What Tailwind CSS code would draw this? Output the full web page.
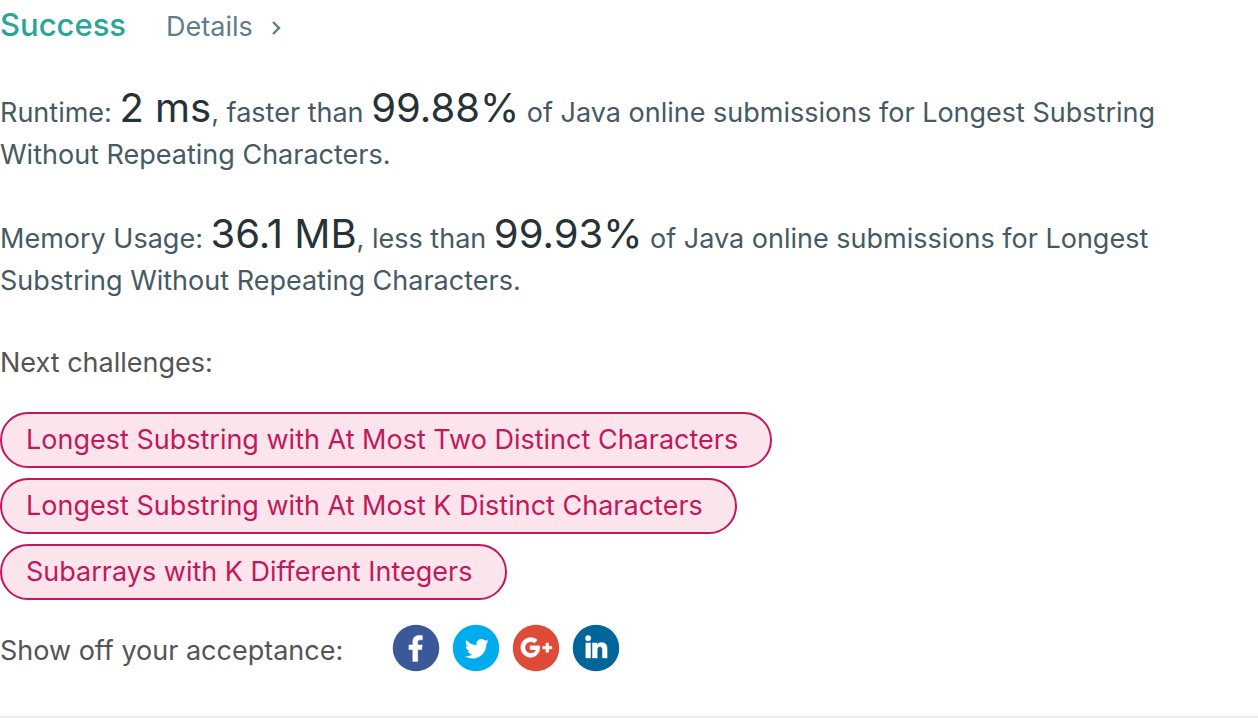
<!DOCTYPE html>
<html lang="en">
<head>
<meta charset="utf-8">
<meta name="viewport" content="width=device-width, initial-scale=1">
<title>Submission result</title>
<script src="https://cdn.jsdelivr.net/npm/@tailwindcss/browser@4"></script>
</head>
<body class="bg-white font-['Inter',sans-serif] text-[27px] leading-[42px] text-[#455a64]">
<main class="border-b-2 border-[#eeeeee] pt-1 pb-11">
  <header class="flex items-baseline gap-10">
    <h1 class="text-[31px] font-medium text-[#26a69a]">Success</h1>
    <a href="#" class="flex items-center gap-4 text-[#607d8b]">Details
      <svg class="mt-0.5 h-4 w-4" viewBox="0 0 16 16" fill="none" stroke="currentColor" stroke-width="2.4" aria-hidden="true"><path d="M4 2l6 6-6 6"/></svg>
    </a>
  </header>
  <section class="mt-11 flex flex-col gap-[42px]">
    <p>Runtime: <span class="text-[40px] leading-[30px] text-[#263238]">2 ms</span>, faster than <span class="text-[40px] leading-[30px] text-[#263238]">99.88%</span> of Java online submissions for Longest Substring Without Repeating Characters.</p>
    <p>Memory Usage: <span class="text-[40px] leading-[30px] text-[#263238]">36.1 MB</span>, less than <span class="text-[40px] leading-[30px] text-[#263238]">99.93%</span> of Java online submissions for Longest Substring Without Repeating Characters.</p>
  </section>
  <section class="mt-10 text-[#545454]">
    <h2>Next challenges:</h2>
    <ul class="mt-7 flex flex-col items-start gap-[10px] text-[#c2185b]">
      <li><a href="#" class="flex h-14 items-center rounded-full border-2 border-[#c2185b] bg-[#fce4ec] pr-8 pl-6">Longest Substring with At Most Two Distinct Characters</a></li>
      <li><a href="#" class="flex h-14 items-center rounded-full border-2 border-[#c2185b] bg-[#fce4ec] pr-8 pl-6">Longest Substring with At Most K Distinct Characters</a></li>
      <li><a href="#" class="flex h-14 items-center rounded-full border-2 border-[#c2185b] bg-[#fce4ec] pr-8 pl-6">Subarrays with K Different Integers</a></li>
    </ul>
  </section>
  <section class="mt-6 flex items-end gap-[49px] text-[#545454]">
    <p>Show off your acceptance:</p>
    <div class="flex gap-3">
      <a href="#" aria-label="Share on Facebook"><svg class="size-12" viewBox="0 0 64 64" aria-hidden="true"><circle cx="32" cy="32" r="31" fill="#3b5998"/><path transform="translate(-5 -4.200) scale(1.15)" fill="#fff" stroke="#fff" stroke-width=".6" d="M34.100 47V33.300h4.600l.7-5.300h-5.300v-3.400c0-1.500.4-2.600 2.600-2.600h2.800v-4.800c-.5-.1-2.200-.2-4.100-.2-4.100 0-6.900 2.500-6.900 7V28H24v5.300h4.500V47h5.600z"/></svg></a>
      <a href="#" aria-label="Share on Twitter"><svg class="size-12" viewBox="0 0 64 64" aria-hidden="true"><circle cx="32" cy="32" r="31" fill="#00aced"/><path transform="translate(1 1)" fill="#fff" d="M48 22.100c-1.200.5-2.400.9-3.800 1 1.400-.8 2.400-2.100 2.900-3.600-1.300.8-2.700 1.300-4.200 1.600C41.700 19.800 40 19 38.200 19c-3.600 0-6.600 2.900-6.600 6.600 0 .5.100 1 .2 1.500-5.500-.3-10.300-2.900-13.500-6.900-.6 1-.9 2.100-.9 3.300 0 2.300 1.200 4.300 2.900 5.500-1.100 0-2.100-.3-3-.8v.1c0 3.200 2.300 5.800 5.300 6.400-.6.100-1.100.2-1.700.2-.4 0-.8 0-1.200-.1.800 2.600 3.300 4.500 6.100 4.600-2.200 1.800-5.100 2.800-8.200 2.800-.5 0-1.100 0-1.600-.1 2.900 1.900 6.400 2.900 10.100 2.900 12.100 0 18.700-10 18.700-18.700v-.8c1.200-1 2.300-2.100 3.200-3.400z"/></svg></a>
      <a href="#" aria-label="Share on Google Plus"><svg class="size-12" viewBox="0 0 64 64" aria-hidden="true"><circle cx="32" cy="32" r="31" fill="#dd4b39"/><path fill="#fff" stroke="#fff" stroke-width="1" d="M24.300 29.200v4.800h7.900c-.6 3.100-3 5.400-7.900 5.400a8 8 0 1 1 5.600-14.300l3.600-3.600A13 13 0 1 0 24.300 44.200c7.600 0 12.500-5.400 12.500-13 0-.7-.1-1.300-.2-2H24.300zM45.400 25.500h3.200v4.400h4.400v3.200h-4.400v4.400h-3.200v-4.400H41v-3.200h4.400z"/></svg></a>
      <a href="#" aria-label="Share on LinkedIn"><svg class="size-12" viewBox="0 0 64 64" aria-hidden="true"><circle cx="32" cy="32" r="31" fill="#006699"/><path transform="translate(-5 -5.400) scale(1.150)" fill="#fff" stroke="#fff" stroke-width=".6" d="M20.400 44h5.400V26.600h-5.400V44zm2.700-19.800a3.100 3.100 0 1 0 0-6.200 3.100 3.100 0 0 0 0 6.200zM39.700 44H45v-9.500c0-4.700-1-8.300-6.500-8.300-2.600 0-4.400 1.400-5.100 2.800h-.1v-2.400h-5.200V44h5.400v-8.600c0-2.300.4-4.500 3.200-4.500 2.800 0 3 2.600 3 4.600V44z"/></svg></a>
    </div>
  </section>
</main>
</body>
</html>
